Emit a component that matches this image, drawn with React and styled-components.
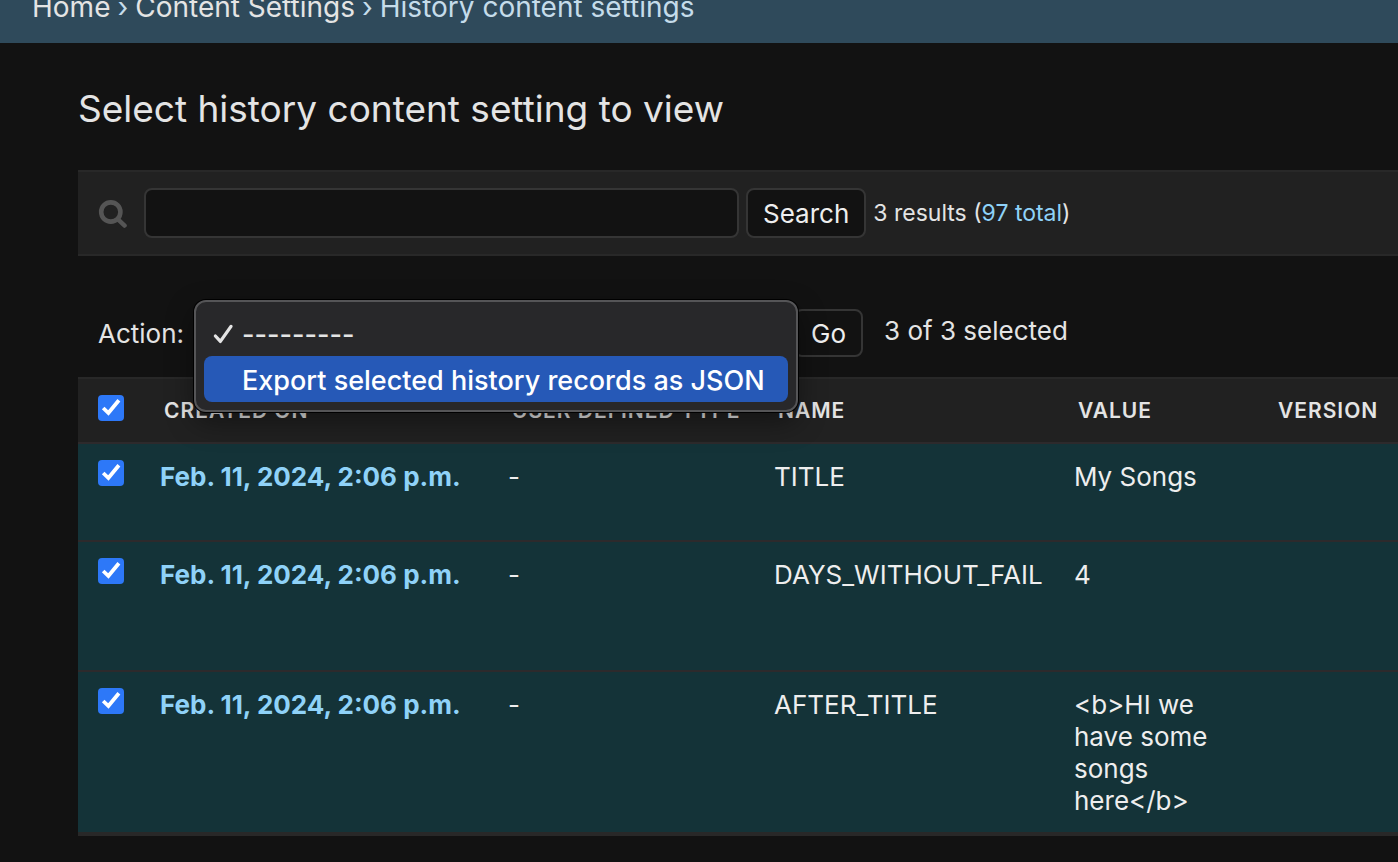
import React, { useState } from "react";
import styled, { createGlobalStyle } from "styled-components";

const GlobalStyle = createGlobalStyle`
  *, *::before, *::after { box-sizing: border-box; }
  body {
    margin: 0;
    background: #121212;
    color: #e4e4e4;
    font-family: Inter, "Liberation Sans", sans-serif;
    font-size: 26px;
    line-height: 32px;
    overflow-x: hidden;
  }
  input, button, select { font: inherit; color: inherit; }
`;

const Breadcrumbs = styled.nav`
  display: flex;
  align-items: flex-end;
  gap: 7px;
  height: 43px;
  padding: 0 32px 20px;
  background: #2f4a5b;
  color: #c5dcea;
  font-size: 28px;
  white-space: nowrap;
  overflow: hidden;
`;

const Crumb = styled.a`
  color: #e4e4e4;
  text-decoration: none;
`;

const Main = styled.main`
  padding: 40px 0 24px 78px;
`;

const Title = styled.h1`
  margin: 0 0 36px;
  font-size: 37px;
  font-weight: 400;
  line-height: 51px;
`;

const Toolbar = styled.form`
  display: flex;
  align-items: center;
  gap: 7px;
  height: 86px;
  padding: 0 20px;
  background: #212121;
  border: 2px solid #282828;
  border-width: 2px 0;
`;

const SearchLabel = styled.label`
  display: flex;
  margin-right: 9px;
`;

const SearchInput = styled.input`
  width: 595px;
  height: 50px;
  padding: 8px 12px;
  background: #121212;
  border: 2px solid #353535;
  border-radius: 8px;
`;

const Button = styled.button`
  height: ${(p) => (p.$small ? 48 : 50)}px;
  padding: 2px 15px 0;
  background: #121212;
  border: 2px solid #353535;
  border-radius: 8px;
  color: #eee;
`;

const Results = styled.span`
  font-size: 23px;
`;

const Link = styled.a`
  color: #8fd2f8;
  text-decoration: none;
`;

const Actions = styled.div`
  display: flex;
  align-items: center;
  height: 48px;
  margin: 53px 0 20px;
  padding-left: 20px;
`;

const ActionLabel = styled.label`
  padding-top: 2px;
`;

const ActionField = styled.div`
  position: relative;
  width: 590px;
  margin: 0 10px;
`;

const ActionSelect = styled.select`
  display: block;
  width: 100%;
  height: 48px;
  background: #121212;
  border: 2px solid #353535;
  border-radius: 8px;
`;

const Menu = styled.div`
  position: absolute;
  top: -9px;
  left: 0;
  z-index: 1;
  width: 604px;
  padding: 8px;
  background: #28282a;
  border: 2px solid #555557;
  border-radius: 12px;
  box-shadow: 0 0 0 1px #000, 0 10px 28px rgba(0, 0, 0, 0.4);
`;

const MenuItem = styled.button`
  display: flex;
  align-items: center;
  gap: 8px;
  width: 100%;
  height: 46px;
  padding: 3px 8px 0;
  border: 0;
  border-radius: 8px;
  background: ${(p) => (p.$active ? "#2659b7" : "transparent")};
  color: ${(p) => (p.$active ? "#fff" : "#e4e4e4")};
  font-size: 27px;
  font-weight: 500;
  text-align: left;
  white-space: nowrap;
`;

const MenuMark = styled.span`
  display: flex;
  width: 22px;
`;

const Selected = styled.span`
  margin-left: 21px;
  padding-bottom: 4px;
`;

const Table = styled.table`
  width: 100%;
  table-layout: fixed;
  border-spacing: 0;
  border-bottom: 4px solid #282828;
`;

const Col = styled.col`
  width: ${(p) => p.$width}px;
`;

const HeadCell = styled.th`
  height: 65px;
  padding: ${(p) => (p.$check ? "0 0 6px 20px" : "0 0 0 20px")};
  background: #212121;
  border-top: 2px solid #282828;
  font-size: 21px;
  font-weight: 600;
  letter-spacing: 1px;
  text-align: left;
  text-transform: uppercase;
  white-space: nowrap;
`;

const Row = styled.tr`
  height: ${(p) => p.$lines * 32 + 34}px;
  background: #143338;
`;

const Cell = styled.td`
  padding: 17px 16px 15px;
  border-top: 2px solid #2d2a2c;
  color: #eee;
  vertical-align: top;
`;

const CheckCell = styled(Cell)`
  padding: 16px 20px;
`;

const RowHead = styled.th`
  padding: 17px 16px 15px;
  border-top: 2px solid #2d2a2c;
  font-weight: 700;
  text-align: left;
  vertical-align: top;
  white-space: nowrap;
`;

const CheckBox = styled.span`
  display: grid;
  width: 26px;
  height: 26px;

  input, svg { grid-area: 1 / 1; }
  svg { pointer-events: none; visibility: hidden; }
  input:checked + svg { visibility: visible; }
`;

const CheckInput = styled.input`
  appearance: none;
  width: 26px;
  height: 26px;
  margin: 0;
  border-radius: 4px;
  background: #3b3b3b;
  &:checked { background: #2d78f8; }
`;

function Check({ label, checked, onChange }) {
  return (
    <CheckBox>
      <CheckInput type="checkbox" aria-label={label} checked={checked} onChange={onChange} />
      <svg width="26" height="26" viewBox="0 0 26 26" fill="none" aria-hidden="true">
        <path d="M5.2 13l5.2 5L20.9 5.2" stroke="#fff" strokeWidth="3.8" />
      </svg>
    </CheckBox>
  );
}

const records = [
  { name: "TITLE", value: "My Songs", lines: 2 },
  { name: "DAYS_WITHOUT_FAIL", value: "4", lines: 3 },
  { name: "AFTER_TITLE", value: "<b>HI we have some songs here</b>", lines: 4 },
];

export default function App() {
  const [picked, setPicked] = useState([true, true, true]);
  const count = picked.filter(Boolean).length;
  const toggle = (i) => setPicked(picked.map((v, j) => (i === j ? !v : v)));
  const all = count === picked.length;

  return (
    <>
      <GlobalStyle />
      <Breadcrumbs aria-label="Breadcrumbs">
        <Crumb href="#home">Home</Crumb>
        <span>›</span>
        <Crumb href="#content">Content Settings</Crumb>
        <span>›</span>
        <span>History content settings</span>
      </Breadcrumbs>
      <Main>
        <Title>Select history content setting to view</Title>
        <Toolbar role="search" onSubmit={(e) => e.preventDefault()}>
          <SearchLabel htmlFor="searchbar" aria-label="Search">
            <svg width="30" height="30" viewBox="0 0 30 30" fill="none" stroke="#555" aria-hidden="true">
              <circle cx="12.8" cy="14" r="9.6" strokeWidth="4.6" />
              <path d="M20 21.4l6.6 6.2" strokeWidth="4.4" strokeLinecap="round" />
            </svg>
          </SearchLabel>
          <SearchInput id="searchbar" type="text" />
          <Button type="submit">Search</Button>
          <Results>
            3 results (<Link href="#all">97 total</Link>)
          </Results>
        </Toolbar>
        <Actions>
          <ActionLabel htmlFor="action">Action:</ActionLabel>
          <ActionField>
            <ActionSelect id="action">
              <option>---------</option>
              <option>Export selected history records as JSON</option>
            </ActionSelect>
            <Menu>
              <MenuItem type="button">
                <MenuMark>
                  <svg width="22" height="22" viewBox="0 0 22 22" fill="none" aria-hidden="true">
                    <path
                      d="M3.4 12l5 5.4L19 2.4"
                      stroke="#e4e4e4"
                      strokeWidth="3.3"
                      strokeLinecap="round"
                      strokeLinejoin="round"
                    />
                  </svg>
                </MenuMark>
                ---------
              </MenuItem>
              <MenuItem type="button" $active>
                <MenuMark />
                Export selected history records as JSON
              </MenuItem>
            </Menu>
          </ActionField>
          <Button type="button" $small>Go</Button>
          <Selected>{count} of 3 selected</Selected>
        </Actions>
        <Table>
          <colgroup>
            <Col $width={66} />
            <Col $width={348} />
            <Col $width={266} />
            <Col $width={300} />
            <Col $width={200} />
            <col />
          </colgroup>
          <thead>
            <tr>
              <HeadCell scope="col" $check>
                <Check label="Select all" checked={all} onChange={() => setPicked(picked.map(() => !all))} />
              </HeadCell>
              <HeadCell scope="col">Created on</HeadCell>
              <HeadCell scope="col">User defined type</HeadCell>
              <HeadCell scope="col">Name</HeadCell>
              <HeadCell scope="col">Value</HeadCell>
              <HeadCell scope="col">Version</HeadCell>
            </tr>
          </thead>
          <tbody>
            {records.map((r, i) => (
              <Row key={r.name} $lines={r.lines}>
                <CheckCell>
                  <Check label={`Select ${r.name}`} checked={picked[i]} onChange={() => toggle(i)} />
                </CheckCell>
                <RowHead scope="row">
                  <Link href="#record">Feb. 11, 2024, 2:06 p.m.</Link>
                </RowHead>
                <Cell>-</Cell>
                <Cell>{r.name}</Cell>
                <Cell>{r.value}</Cell>
                <Cell />
              </Row>
            ))}
          </tbody>
        </Table>
      </Main>
    </>
  );
}
